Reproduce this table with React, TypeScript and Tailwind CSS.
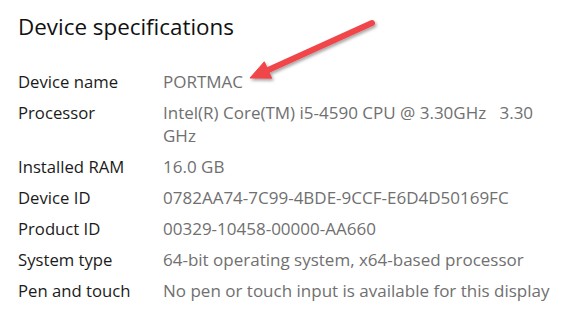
import React from 'react';

const specs = [
  { label: 'Device name', value: 'PORTMAC' },
  { label: 'Processor', value: 'Intel(R) Core(TM) i5-4590 CPU @ 3.30GHz   3.30\nGHz' },
  { label: 'Installed RAM', value: '16.0 GB' },
  { label: 'Device ID', value: '0782AA74-7C99-4BDE-9CCF-E6D4D50169FC' },
  { label: 'Product ID', value: '00329-10458-00000-AA660' },
  { label: 'System type', value: '64-bit operating system, x64-based processor' },
  { label: 'Pen and touch', value: 'No pen or touch input is available for this display' },
];

const Arrow = () => (
  <svg className="absolute left-0 top-0 pointer-events-none" width="583" height="120" viewBox="0 0 583 120">
    <defs>
      <filter id="shadow" x="-20%" y="-50%" width="140%" height="200%">
        <feDropShadow dx="1.5" dy="2" stdDeviation="1.5" floodColor="#000" floodOpacity="0.35" />
      </filter>
    </defs>
    <g filter="url(#shadow)" fill="#f0454a" stroke="#f0454a">
      <line x1="372" y1="23" x2="266" y2="71" strokeWidth="6" strokeLinecap="round" />
      <polygon points="250,78 264.3,61.8 271.7,78.2" strokeWidth="1" strokeLinejoin="round" />
    </g>
  </svg>
);

export default function App() {
  return (
    <div className="relative w-[583px] h-[316px] bg-white overflow-hidden font-['Open_Sans',sans-serif]">
      <div className="pl-[18px] pt-[13px]">
        <h1 className="text-[22.4px] leading-[28px] text-[#111]">Device specifications</h1>
        <div className="mt-[29px] grid grid-cols-[145px_1fr] gap-y-2 leading-[23px]">
          {specs.map((s) => (
            <React.Fragment key={s.label}>
              <div className="text-[16.7px] text-[#1b1b1b]">{s.label}</div>
              <div className="text-[17px] text-[#707070] whitespace-pre">{s.value}</div>
            </React.Fragment>
          ))}
        </div>
      </div>
      <Arrow />
    </div>
  );
}
